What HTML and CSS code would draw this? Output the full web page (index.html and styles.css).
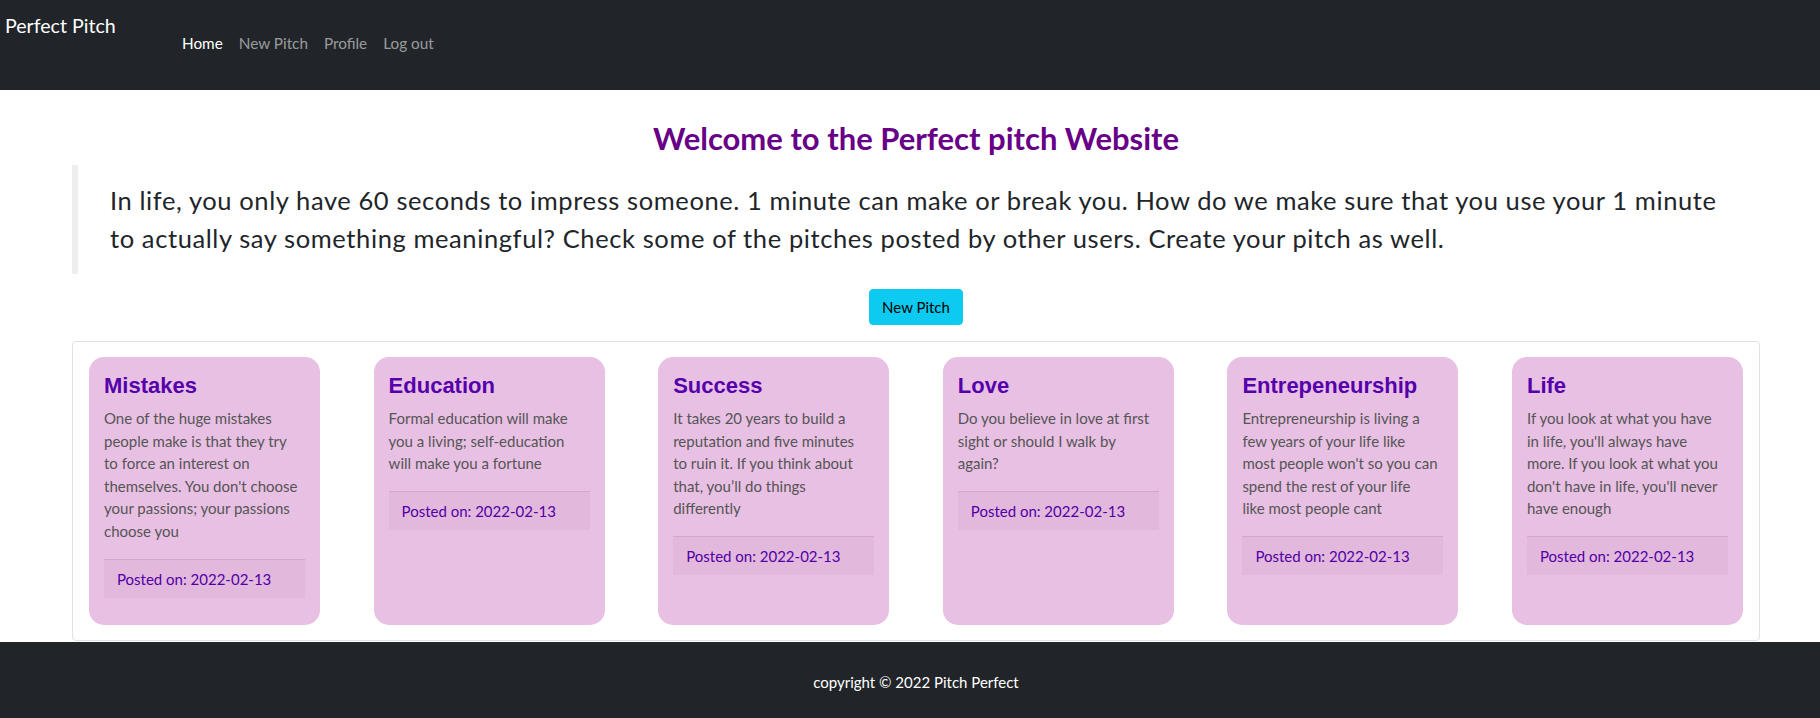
FILE: index.html
```html
<!DOCTYPE html>
<html lang="en">
<head>
<meta charset="utf-8">
<title>Perfect Pitch</title>
<link rel="stylesheet" href="styles.css">
</head>
<body>
<nav class="navbar">
  <a class="brand" href="#">Perfect Pitch</a>
  <ul class="nav">
    <li><a class="nav-link active" href="#">Home</a></li>
    <li><a class="nav-link" href="#">New Pitch</a></li>
    <li><a class="nav-link" href="#">Profile</a></li>
    <li><a class="nav-link" href="#">Log out</a></li>
  </ul>
</nav>
<main class="main">
  <h2 class="welcome">Welcome to the Perfect pitch Website</h2>
  <blockquote class="intro">In life, you only have 60 seconds to impress someone. 1 minute can make or break you. How do we make sure that you use your 1 minute to actually say something meaningful? Check some of the pitches posted by other users. Create your pitch as well.</blockquote>
  <div class="actions"><a class="btn-info" href="#">New Pitch</a></div>
  <section class="pitches">
    <article class="pitch-card">
      <h4 class="card-title">Mistakes</h4>
      <p class="card-text">One of the huge mistakes<br>people make is that they try<br>to force an interest on<br>themselves. You don't choose<br>your passions; your passions<br>choose you</p>
      <div class="card-footer">Posted on: 2022-02-13</div>
    </article>
    <article class="pitch-card">
      <h4 class="card-title">Education</h4>
      <p class="card-text">Formal education will make<br>you a living; self-education<br>will make you a fortune</p>
      <div class="card-footer">Posted on: 2022-02-13</div>
    </article>
    <article class="pitch-card">
      <h4 class="card-title">Success</h4>
      <p class="card-text">It takes 20 years to build a<br>reputation and five minutes<br>to ruin it. If you think about<br>that, you’ll do things<br>differently</p>
      <div class="card-footer">Posted on: 2022-02-13</div>
    </article>
    <article class="pitch-card">
      <h4 class="card-title">Love</h4>
      <p class="card-text">Do you believe in love at first<br>sight or should I walk by<br>again?</p>
      <div class="card-footer">Posted on: 2022-02-13</div>
    </article>
    <article class="pitch-card">
      <h4 class="card-title">Entrepeneurship</h4>
      <p class="card-text">Entrepreneurship is living a<br>few years of your life like<br>most people won't so you can<br>spend the rest of your life<br>like most people cant</p>
      <div class="card-footer">Posted on: 2022-02-13</div>
    </article>
    <article class="pitch-card">
      <h4 class="card-title">Life</h4>
      <p class="card-text">If you look at what you have<br>in life, you'll always have<br>more. If you look at what you<br>don't have in life, you'll never<br>have enough</p>
      <div class="card-footer">Posted on: 2022-02-13</div>
    </article>
  </section>
</main>
<footer class="site-footer">copyright © 2022 Pitch Perfect</footer>
</body>
</html>
```
FILE: styles.css
```css
* { box-sizing: border-box; }
html, body { margin: 0; padding: 0; }
body {
  font-family: Lato, "Open Sans", sans-serif;
  font-size: 16px;
  line-height: 1.5;
  color: #212529;
  background: #fff;
}
a { text-decoration: none; }

.navbar {
  height: 90px;
  background: #212529;
  display: flex;
  align-items: flex-start;
}
.brand {
  color: #fff;
  font-size: 19.6px;
  line-height: 30px;
  padding: 11px 0 0 5px;
  width: 174px;
}
.nav {
  list-style: none;
  margin: 0;
  padding: 31px 0 0;
  display: flex;
}
.nav-link {
  display: block;
  padding: 0 8px;
  font-size: 15.3px;
  line-height: 24px;
  color: rgba(255, 255, 255, 0.55);
}
.nav-link.active { color: #fff; }

.main {
  padding: 0 60px 0 72px;
}
.welcome {
  margin: 30px 0 9px;
  text-align: center;
  font-size: 31px;
  line-height: 36px;
  font-weight: 700;
  color: #680087;
}
.intro {
  margin: 0;
  padding: 16px 32px 16px 32px;
  border-left: 6px solid #eeeeee;
  font-size: 25.5px;
  line-height: 38.3px;
  letter-spacing: 0.6px;
  color: #212529;
}
.actions {
  display: flex;
  justify-content: center;
  margin-top: 15px;
}
.btn-info {
  display: inline-block;
  background: #0dcaf0;
  border: 1px solid #0dcaf0;
  color: #000;
  font-size: 15px;
  line-height: 24px;
  padding: 5px 12px;
  border-radius: 4px;
}
.pitches {
  margin-top: 16px;
  border: 1px solid #dee2e6;
  border-radius: 4px;
  padding: 15px 16px 15px 16px;
  display: flex;
  justify-content: space-between;
  align-items: stretch;
}
.pitch-card {
  width: 231px;
  background: #e8c0e3;
  border-radius: 15px;
  padding: 16px 15px 27px;
  min-height: 268px;
}
.card-title {
  margin: 0 0 8px;
  font-family: "Liberation Sans", Arial, sans-serif;
  font-weight: 700;
  font-size: 22px;
  line-height: 26.4px;
  color: #5500aa;
}
.card-text {
  margin: 0 0 16px;
  font-size: 15px;
  line-height: 22.6px;
  color: #555555;
  white-space: nowrap;
}
.card-footer {
  border-top: 1px solid #d2a8cd;
  background: #e2b8dd;
  padding: 7px 13px;
  font-size: 15px;
  line-height: 24px;
  color: #5000a5;
}

.site-footer {
  margin-top: 1px;
  height: 76px;
  background: #212529;
  color: #fff;
  font-size: 15px;
  display: flex;
  align-items: center;
  justify-content: center;
  padding: 5px 0 0 12px;
}
```
